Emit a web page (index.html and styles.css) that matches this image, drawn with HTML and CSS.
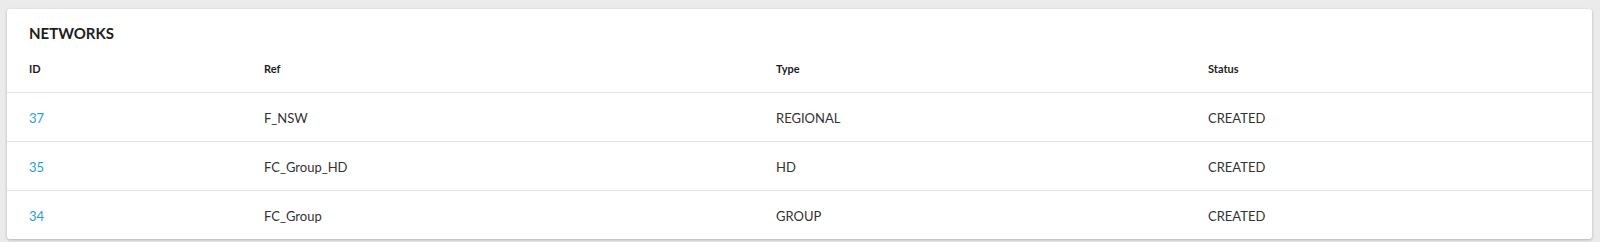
FILE: index.html
```html
<!DOCTYPE html>
<html>
<head>
<meta charset="utf-8">
<link rel="stylesheet" href="styles.css">
</head>
<body>
<div class="card">
  <h2 class="card-title">NETWORKS</h2>
  <table class="grid">
    <colgroup>
      <col class="c-id"><col class="c-ref"><col class="c-type"><col class="c-status">
    </colgroup>
    <thead>
      <tr><th>ID</th><th>Ref</th><th>Type</th><th>Status</th></tr>
    </thead>
    <tbody>
      <tr><td><a class="link" href="#">37</a></td><td>F_NSW</td><td>REGIONAL</td><td>CREATED</td></tr>
      <tr><td><a class="link" href="#">35</a></td><td>FC_Group_HD</td><td>HD</td><td>CREATED</td></tr>
      <tr><td><a class="link" href="#">34</a></td><td>FC_Group</td><td>GROUP</td><td>CREATED</td></tr>
    </tbody>
  </table>
</div>
</body>
</html>
```
FILE: styles.css
```css
html, body {
  margin: 0;
  background: #ebebeb;
}
body {
  padding: 9px 8px 6px 7px;
  font-family: Lato, "Open Sans", Arial, sans-serif;
  color: #333;
}
.card {
  background: #fff;
  border-radius: 3px;
  box-shadow: 0 1px 3px rgba(0,0,0,0.25);
  padding-top: 15px;
}
.card-title {
  margin: 0 0 2px 22px;
  font-size: 15px;
  line-height: 18px;
  font-weight: 700;
  color: #1d1d1d;
}
.grid {
  width: 100%;
  border-collapse: collapse;
  table-layout: fixed;
}
.c-id { width: 257px; }
.c-ref { width: 512px; }
.c-type { width: 432px; }
.grid th {
  height: 48px;
  padding: 0;
  text-align: left;
  font-size: 11px;
  font-weight: 700;
  color: #1d1d1d;
  vertical-align: middle;
}
.grid td {
  height: 47px;
  padding: 0;
  font-size: 13px;
  color: #333;
  vertical-align: middle;
  border-top: 1px solid #e4e4e4;
  padding-top: 1px;
}
.grid th:first-child,
.grid td:first-child {
  padding-left: 22px;
}
.link {
  color: #1f9fdd;
  text-decoration: none;
}
```
